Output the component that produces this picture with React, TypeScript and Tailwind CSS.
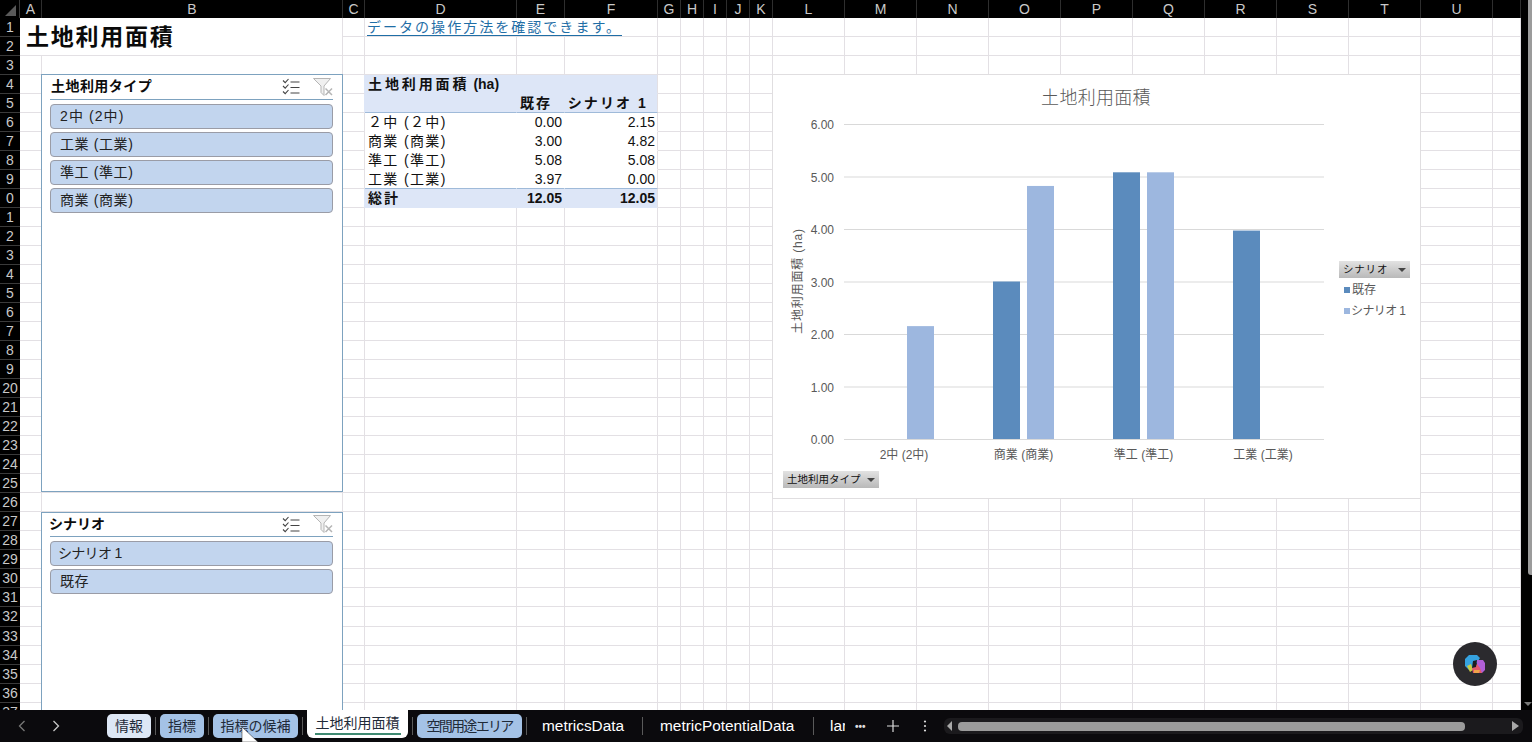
import React from "react";

const cols = ["A","B","C","D","E","F","G","H","I","J","K","L","M","N","O","P","Q","R","S","T","U",""];
const gridCols = "grid-cols-[22px_301px_22px_152px_48px_93px_23px_23px_23px_23px_23px_72px_72px_72px_72px_72px_72px_72px_72px_72px_72px_28px]";
const rowLabel = (r: number) => (r >= 10 && r < 20 ? String(r % 10) : String(r));
const jp = "font-['Liberation_Sans','Noto_Sans_CJK_JP',sans-serif]";

const hdr = "bg-[#dde6f7] border-[#dde6f7]";
const hdrEnd = "bg-[#dde6f7] border-r-[#e3e0e4] border-b-[#dde6f7]";
const body = "bg-white border-white";
const bodyEnd = "bg-white border-r-[#e3e0e4] border-b-white";
const lineB = "bg-[#dde6f7] border-r-[#dde6f7] border-b-[#9fbad9]";
const lineBEnd = "bg-[#dde6f7] border-r-[#e3e0e4] border-b-[#9fbad9]";
const lineW = "bg-white border-r-white border-b-[#9fbad9]";
const lineWEnd = "bg-white border-r-[#e3e0e4] border-b-[#9fbad9]";
const num = "justify-end pr-[2px] text-[14px] text-[#111]";
const lab = "pl-[3px] text-[14px] tracking-[1.35px] text-[#111]";
const edge = (c: string) => `bg-white border-b-[#e3e0e4] ${c}`;

const table: Record<string, { t?: React.ReactNode; c: string }> = {
  "4-2": { c: edge("border-r-[#dde6f7]") },
  "5-2": { c: edge("border-r-[#dde6f7]") },
  "10-2": { c: edge("border-r-[#dde6f7]") },
  "4-3": {
    t: (
      <>
        <span className="tracking-[2.9px]">土地利用面積</span>
        <span className="ml-[4px]">(ha)</span>
      </>
    ),
    c: `${hdr} pl-[3px] text-[14px] font-bold text-[#111]`,
  },
  "4-4": { c: hdr }, "4-5": { c: hdrEnd },
  "5-3": { c: lineB },
  "5-4": { t: "既存", c: `${lineB} justify-end pr-[12px] text-[14px] font-bold tracking-[2px] text-[#111]` },
  "5-5": { t: "シナリオ 1", c: `${lineBEnd} justify-end pr-[9px] text-[14px] font-bold tracking-[2.1px] text-[#111]` },
  "6-3": { t: "２中 (２中)", c: `${body} ${lab}` }, "6-4": { t: "0.00", c: `${body} ${num}` }, "6-5": { t: "2.15", c: `${bodyEnd} ${num}` },
  "7-3": { t: "商業 (商業)", c: `${body} ${lab}` }, "7-4": { t: "3.00", c: `${body} ${num}` }, "7-5": { t: "4.82", c: `${bodyEnd} ${num}` },
  "8-3": { t: "準工 (準工)", c: `${body} ${lab}` }, "8-4": { t: "5.08", c: `${body} ${num}` }, "8-5": { t: "5.08", c: `${bodyEnd} ${num}` },
  "9-3": { t: "工業 (工業)", c: `${lineW} ${lab}` }, "9-4": { t: "3.97", c: `${lineW} ${num}` }, "9-5": { t: "0.00", c: `${lineWEnd} ${num}` },
  "10-3": { t: "総計", c: `${hdr} pl-[3px] text-[14px] font-bold tracking-[2px] text-[#111]` },
  "10-4": { t: "12.05", c: `${hdr} justify-end pr-[2px] text-[14px] font-bold text-[#111]` },
  "10-5": { t: "12.05", c: `${hdrEnd} justify-end pr-[2px] text-[14px] font-bold text-[#111]` },
};

function Cells() {
  const out: React.ReactNode[] = [];
  for (let r = 1; r <= 37; r++) {
    for (let c = 0; c < cols.length; c++) {
      const key = `${r}-${c}`;
      if (r === 1 && c === 0) {
        out.push(
          <div key={key} className="col-span-2 row-span-2 flex items-center border-r border-b border-[#e3e0e4] bg-white pl-[6px] pt-[2px] text-[23px] font-bold tracking-[1.75px] text-[#0a0a0a]">
            土地利用面積
          </div>
        );
        continue;
      }
      if ((r === 1 && c === 1) || (r === 2 && (c === 0 || c === 1))) continue;
      if (r === 1 && c === 3) {
        out.push(
          <div key={key} className="col-span-3 flex items-center border-r border-b border-[#e3e0e4] bg-white pl-[2px]">
            <span className="whitespace-nowrap border-b border-[#1f6ea6] pt-[2px] text-[14px] leading-[15px] tracking-[2.03px] text-[#1f6ea6]">データの操作方法を確認できます。</span>
          </div>
        );
        continue;
      }
      if (r === 1 && (c === 4 || c === 5)) continue;
      const t = table[key];
      if (t) {
        out.push(
          <div key={key} className={`flex items-center overflow-visible whitespace-nowrap border-r border-b ${t.c}`}>
            {t.t}
          </div>
        );
      } else {
        out.push(<div key={key} className="border-r border-b border-[#e3e0e4] bg-white" />);
      }
    }
  }
  return <>{out}</>;
}

function ChecklistIcon() {
  return (
    <svg width="18" height="17" viewBox="0 0 18 17" fill="none" stroke="#444" strokeWidth="1.1">
      <path d="M1 2.5l2.2 2.2L6.5 1" />
      <path d="M1 8l2.2 2.2L6.5 6.5" />
      <path d="M1 13.5l2.2 2.2L6.5 12" />
      <path d="M8.5 4h9M8.5 9.5h9M8.5 15h9" />
    </svg>
  );
}

function FilterClearIcon() {
  return (
    <svg width="20" height="18" viewBox="0 0 20 18" fill="none">
      <path d="M0.5 0.5h17l-6.5 7.5v9.5l-3-3V8z" fill="#f0f0f0" stroke="#b5b5b5" strokeWidth="1" />
      <path d="M12.5 10.5l6.5 6.5M19 10.5l-6.5 6.5" stroke="#b5b5b5" strokeWidth="1.5" />
    </svg>
  );
}

function SlicerItem({ label, className = "pl-[9px] tracking-[0.6px]" }: { label: string; className?: string }) {
  return (
    <div className={`flex h-[25px] items-center rounded-[4px] border border-[#9a9ca6] bg-[#c2d5ee] text-[14px] text-[#222] ${className}`}>
      {label}
    </div>
  );
}

function SlicerHeader({ title, titleClass, heightClass }: { title: string; titleClass: string; heightClass: string }) {
  return (
    <div className={`flex items-center justify-between border-b border-[#7da2bf] ${heightClass}`}>
      <span className={`pb-[1px] text-[14px] font-bold text-[#0c0c0c] ${titleClass}`}>{title}</span>
      <span className="flex items-center gap-[13px] pb-[1px]">
        <ChecklistIcon />
        <FilterClearIcon />
      </span>
    </div>
  );
}

function PivotButton({ label, className }: { label: string; className: string }) {
  return (
    <div className={`absolute flex h-[17px] items-center justify-between bg-gradient-to-b from-[#e2e2e2] to-[#b9b9b9] pl-[4px] pr-[4px] text-[10.5px] text-[#111] ${className}`}>
      <span>{label}</span>
      <span className="h-0 w-0 border-x-[4px] border-t-[4px] border-x-transparent border-t-[#444]" />
    </div>
  );
}

function Chart() {
  const ox = 772, oy = 74;
  const ys = [0, 1, 2, 3, 4, 5, 6];
  const y = (v: number) => 439.5 - oy - v * 52.5;
  const bars = [
    { x: 907, v: 2.15, f: "#9db7df" },
    { x: 993, v: 3.0, f: "#5b8bbd" },
    { x: 1027, v: 4.82, f: "#9db7df" },
    { x: 1113, v: 5.08, f: "#5b8bbd" },
    { x: 1147, v: 5.08, f: "#9db7df" },
    { x: 1233, v: 3.97, f: "#5b8bbd" },
  ];
  const cats = [
    ["2中 (2中)", 904],
    ["商業 (商業)", 1023.5],
    ["準工 (準工)", 1143.5],
    ["工業 (工業)", 1263],
  ] as const;
  return (
    <div className="absolute left-[752px] top-[56px] h-[425px] w-[649px] border border-[#e0dee0] bg-white">
      <svg width="648" height="424" viewBox="0 0 648 424" className={`-ml-px -mt-px ${jp}`}>
        <text x="324" y="30" textAnchor="middle" fontSize="18" letterSpacing="0.3" fill="#595959" fontWeight="300">土地利用面積</text>
        {ys.map((v) => (
          <g key={v}>
            <line x1={844 - ox} x2={1324 - ox} y1={y(v)} y2={y(v)} stroke="#d9d9d9" strokeWidth="1" />
            <text x={834 - ox} y={y(v) + 4.5} textAnchor="end" fontSize="12" fill="#595959">{v.toFixed(2)}</text>
          </g>
        ))}
        {bars.map((b) => (
          <rect key={b.x} x={b.x - ox} y={439 - oy - b.v * 52.5} width="27" height={b.v * 52.5} fill={b.f} />
        ))}
        {cats.map(([t, x]) => (
          <text key={t} x={x - ox} y={459 - oy} textAnchor="middle" fontSize="12" fill="#595959">{t}</text>
        ))}
        <text transform={`translate(${802 - ox},${281 - oy}) rotate(-90)`} textAnchor="middle" fontSize="12" letterSpacing="0.8" fill="#595959">土地利用面積 (ha)</text>
        <rect x={1344 - ox} y={287 - oy} width="6" height="6" fill="#5b8bbd" />
        <text x={1352 - ox} y={294 - oy} fontSize="12" fill="#595959">既存</text>
        <rect x={1344 - ox} y={308 - oy} width="6" height="6" fill="#9db7df" />
        <text x={1351 - ox} y={315 - oy} fontSize="12" letterSpacing="-0.6" fill="#595959">シナリオ 1</text>
      </svg>
      <PivotButton label="土地利用タイプ" className="left-[10px] top-[396px] w-[96px]" />
      <PivotButton label="シナリオ" className="left-[566px] top-[186px] w-[71px] tracking-[0.8px]" />
    </div>
  );
}

function Tab({ label, tone, className }: { label: string; tone: "light" | "blue"; className: string }) {
  return (
    <div className={`flex h-[24px] shrink-0 items-center justify-center whitespace-nowrap rounded-[5px] text-[14px] text-[#1f2a38] ${tone === "light" ? "bg-[#dde7f5]" : "bg-[#a4c2e6]"} ${className}`}>
      {label}
    </div>
  );
}
const Sep = () => <div className="h-[18px] w-px shrink-0 bg-[#5a5a5a]" />;

export default function App() {
  return (
    <div className={`flex h-[742px] w-[1532px] flex-col overflow-hidden bg-[#0b0a0d] ${jp}`}>
      <div className="flex h-[710px] shrink-0">
        <div className="flex w-[1521px] shrink-0 flex-col overflow-hidden">
          <div className="flex h-[18px] shrink-0 bg-black">
            <div className="relative w-[20px] shrink-0 border-r border-[#3a3a3a]">
              <div className="absolute left-[5px] top-[5px] h-0 w-0 border-b-[11px] border-l-[11px] border-b-[#5a5a5a] border-l-transparent" />
            </div>
            <div className={`grid flex-1 ${gridCols}`}>
              {cols.map((c, i) => (
                <div key={i} className="flex items-center justify-center border-r border-[#2e2e2e] text-[14px] leading-none text-[#c9c9c9]">
                  {c}
                </div>
              ))}
            </div>
          </div>
          <div className="flex min-h-0 flex-1">
            <div className="flex w-[20px] shrink-0 flex-col overflow-hidden bg-black">
              {Array.from({ length: 37 }, (_, i) => (
                <div key={i} className="flex h-[19.03px] shrink-0 items-center justify-center overflow-hidden border-b border-[#3a3a3a] text-[14px] leading-none text-[#c9c9c9]">
                  {rowLabel(i + 1)}
                </div>
              ))}
            </div>
            <div className="relative min-w-0 flex-1 overflow-hidden bg-white">
              <div className={`grid auto-rows-[19.03px] ${gridCols}`}>
                <Cells />
              </div>
              <div className="absolute left-[21px] top-[56px] h-[418px] w-[302px] border border-[#7da2bf] bg-white pl-[8px] pr-[9px]">
                <SlicerHeader title="土地利用タイプ" titleClass="pl-[1px] tracking-[0.45px]" heightClass="h-[25px]" />
                <div className="mt-[4px] flex flex-col gap-[3px]">
                  <SlicerItem label="2中 (2中)" className="pl-[9px] tracking-[1.1px]" />
                  <SlicerItem label="工業 (工業)" />
                  <SlicerItem label="準工 (準工)" />
                  <SlicerItem label="商業 (商業)" />
                </div>
              </div>
              <div className="absolute left-[21px] top-[494px] h-[240px] w-[302px] border border-[#7da2bf] bg-white pl-[8px] pr-[9px]">
                <SlicerHeader title="シナリオ" titleClass="-ml-[1px]" heightClass="h-[24px]" />
                <div className="mt-[4px] flex flex-col gap-[3px]">
                  <SlicerItem label="シナリオ 1" className="pl-[7px] tracking-[-0.7px]" />
                  <SlicerItem label="既存" />
                </div>
              </div>
              <Chart />
              <div className="absolute left-[1433px] top-[624px] flex h-[44px] w-[44px] items-center justify-center rounded-full bg-[#2b2a2e]">
                <svg width="24" height="24" viewBox="0 0 24 24">
                  <path d="M6 3h8l3 3-4 6-3 6H6L2 14V7z" fill="#35a2e0" />
                  <path d="M4 14l4-2 2 6-3 2z" fill="#c9cc45" />
                  <path d="M14 8h6l2 3v7l-3 3h-5z" fill="#b05fd8" />
                  <path d="M9 16l5-4 3 4 2 5H10z" fill="#e2596c" />
                  <path d="M11 18h6l-1 3h-5z" fill="#f0a24a" />
                  <path d="M10 9l4-1-1 7-4 1z" fill="#1d1c20" />
                </svg>
              </div>
            </div>
          </div>
        </div>
        <div className="flex flex-1 flex-col items-end justify-between bg-black">
          <div className="h-[575px] w-[4px] rounded-bl-[3px] bg-[#9b9b9b]" />
          <div className="mb-[4px] h-0 w-0 border-x-[4px] border-t-[4px] border-x-transparent border-t-[#777]" />
        </div>
      </div>

      <div className="relative flex h-[32px] items-center text-white">
        <div className="flex w-[107px] shrink-0 items-center gap-[26px] pl-[18px]">
          <svg width="8" height="12" viewBox="0 0 8 12" fill="none" stroke="#777" strokeWidth="1.3"><path d="M6.5 1L1.5 6l5 5" /></svg>
          <svg width="8" height="12" viewBox="0 0 8 12" fill="none" stroke="#c8c8c8" strokeWidth="1.3"><path d="M1.5 1l5 5-5 5" /></svg>
        </div>
        <div className="flex h-full items-center gap-[4px]">
          <Tab label="情報" tone="light" className="w-[44px]" />
          <Sep />
          <Tab label="指標" tone="blue" className="w-[44px]" />
          <Sep />
          <Tab label="指標の候補" tone="blue" className="w-[85px]" />
          <Sep />
          <div className="flex h-[28px] w-[101px] shrink-0 flex-col items-center self-start rounded-b-[6px] bg-white text-[14px] text-[#1f2a38]">
            <span className="border-b-[2px] border-[#3f8a72] px-[1px] pt-[3px] leading-[20px]">土地利用面積</span>
          </div>
          <Sep />
          <Tab label="空間用途エリア" tone="blue" className="w-[105px] tracking-[-1.7px]" />
          <Sep />
        </div>
        <span className="ml-[15px] w-[82px] shrink-0 whitespace-nowrap text-[15.4px]">metricsData</span>
        <div className="ml-[18px] h-[18px] w-px shrink-0 bg-[#5a5a5a]" />
        <span className="ml-[17px] w-[135px] shrink-0 whitespace-nowrap text-[15.4px]">metricPotentialData</span>
        <div className="ml-[18px] h-[18px] w-px shrink-0 bg-[#5a5a5a]" />
        <span className="ml-[16px] w-[15px] shrink-0 overflow-hidden whitespace-nowrap text-[15.4px]">lar</span>
        <span className="ml-[10px] w-[11px] shrink-0 text-[10px] font-bold tracking-[0px] text-[#ddd]">•••</span>
        <svg className="ml-[21px] shrink-0" width="12" height="12" viewBox="0 0 12 12" stroke="#ddd" strokeWidth="1.2"><path d="M6 0v12M0 6h12" /></svg>
        <svg className="ml-[24px] shrink-0" width="4" height="12" viewBox="0 0 4 12" fill="#ddd"><circle cx="2" cy="1.5" r="1.1" /><circle cx="2" cy="6" r="1.1" /><circle cx="2" cy="10.5" r="1.1" /></svg>
        <div className="ml-[17px] flex h-[16px] w-[579px] shrink-0 items-center rounded-[6px] bg-[#1b1a1d] pl-[3px]">
          <svg className="shrink-0" width="6" height="10" viewBox="0 0 6 10" fill="#a8a8a8"><path d="M5 0v10L0 5z" /></svg>
          <div className="ml-[5px] h-[9px] w-[507px] shrink-0 rounded-[4px] bg-[#9b9b9b]" />
          <svg className="ml-[47px] shrink-0" width="7" height="10" viewBox="0 0 7 10" fill="#a8a8a8"><path d="M0 0v10l7-5z" /></svg>
        </div>
        <svg className="absolute left-[241px] top-[17px]" width="18" height="15" viewBox="0 0 18 15"><path d="M1 0l16 15H1z" fill="#fff" stroke="#222" strokeWidth="0.5" /></svg>
      </div>
    </div>
  );
}
